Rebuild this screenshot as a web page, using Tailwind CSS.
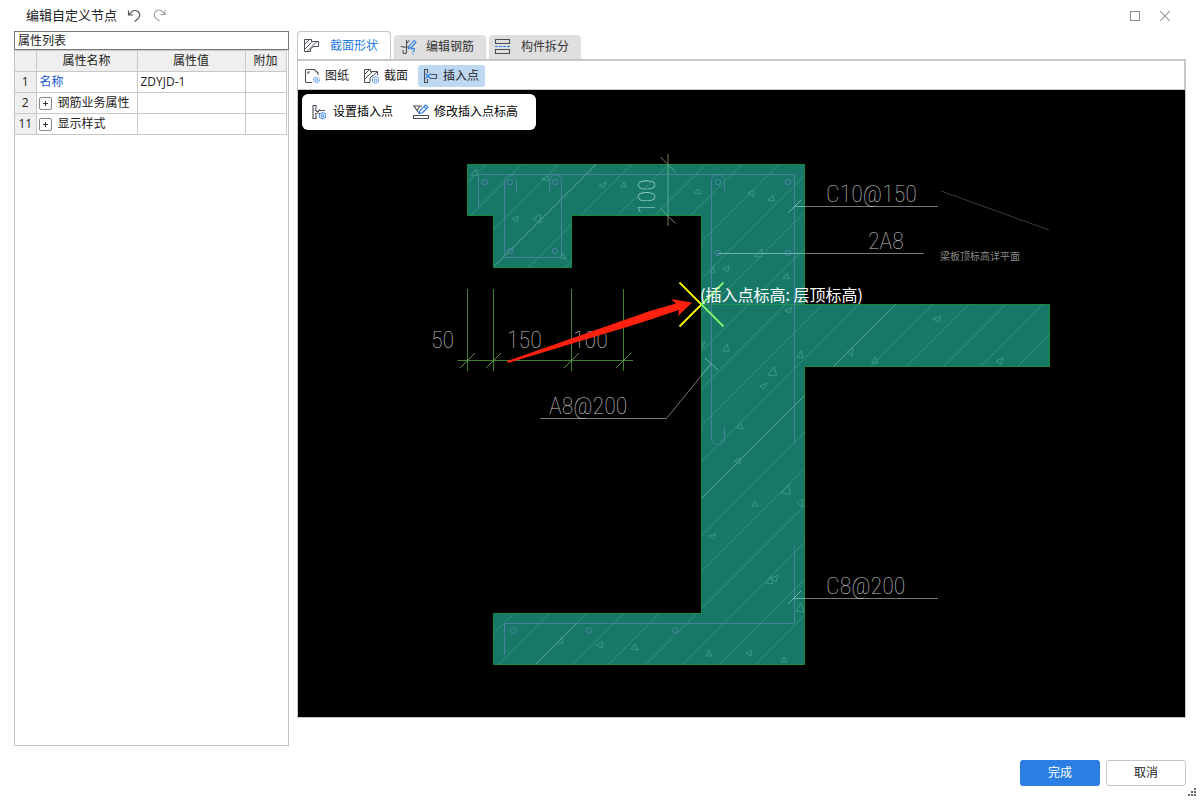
<!DOCTYPE html>
<html lang="zh-CN">
<head>
    <meta charset="UTF-8" />
    <meta name="viewport" content="width=device-width, initial-scale=1" />
    <title>编辑自定义节点</title>
    <script src="https://cdn.jsdelivr.net/npm/@tailwindcss/browser@4"></script>
</head>
<body class="relative flex min-h-screen flex-col bg-white font-['Open_Sans','Noto_Sans_CJK_SC',sans-serif] text-xs text-[#222]">
    <!-- Title bar -->
    <header class="flex h-[31px] items-center pl-[26px] pr-[30px]">
        <h1 class="text-[13px]">编辑自定义节点</h1>
        <button type="button" aria-label="撤销" class="ml-[9px] h-4 w-4">
            <svg viewBox="0 0 16 16" class="h-4 w-4" fill="none" stroke="#555" stroke-width="1.2"><path d="M2.5 2.5 V7 H7 M2.5 7 L6 3.6 C8 1.9 11 2.2 12.6 4.2 C14.2 6.5 13.6 9.1 12 10.7 L8.5 13.5" /></svg>
        </button>
        <button type="button" aria-label="重做" class="ml-[10px] h-4 w-4">
            <svg viewBox="0 0 16 16" class="h-4 w-4" fill="none" stroke="#999" stroke-width="1.1"><path d="M13 2 V6.5 H8.5 M13 6.5 L10 3.2 C8 1.4 5 1.8 3.4 3.8 C1.8 6.1 2.4 8.7 4 10.3 L7.5 13.2" /></svg>
        </button>
        <div class="ml-auto flex gap-5">
            <button type="button" aria-label="最大化" class="h-[10px] w-[10px] border border-[#8a8a8a]"></button>
            <button type="button" aria-label="关闭" class="h-[10px] w-[10px]">
                <svg viewBox="0 0 10 10" class="h-[10px] w-[10px]" stroke="#999" stroke-width="1.1"><path d="M0 0 L10 10 M10 0 L0 10" /></svg>
            </button>
        </div>
    </header>

    <main class="flex flex-1 gap-2 pl-[14px] pr-[14px]">
        <!-- Property list -->
        <section class="mb-[54px] flex w-[275px] shrink-0 flex-col border border-[#c4c4c4] border-t-0">
            <h2 class="-mx-px h-[19px] border border-[#777] pl-[3px] leading-[18px]">属性列表</h2>
            <table class="w-[271px] table-fixed border-collapse text-left [&_td]:border [&_td]:border-l-0 [&_td]:border-[#c8c8c8] [&_th]:border [&_th]:border-l-0 [&_th]:border-[#c8c8c8] [&_th]:font-normal">
                <thead>
                    <tr class="h-[21px] bg-[#efefef] text-center">
                        <th class="w-[21px]"></th>
                        <th class="w-[101px]">属性名称</th>
                        <th class="w-[108px]">属性值</th>
                        <th class="w-[41px]">附加</th>
                    </tr>
                </thead>
                <tbody>
                    <tr class="h-[21px]">
                        <th class="bg-[#efefef] text-center">1</th>
                        <td class="pl-[3px] text-[#1a56d6]">名称</td>
                        <td class="pl-[3px]">ZDYJD-1</td>
                        <td></td>
                    </tr>
                    <tr class="h-[21px]">
                        <th class="bg-[#efefef] text-center">2</th>
                        <td class="pl-[2px]">
                            <div class="flex items-center gap-[6px]">
                                <button type="button" aria-label="展开钢筋业务属性" class="h-[13px] w-[13px] shrink-0 rounded-[2px] border border-[#888]">
                                    <svg viewBox="0 0 11 11" class="h-[11px] w-[11px]" stroke="#333" stroke-width="1"><path d="M3 5.5 H8 M5.5 3 V8" /></svg>
                                </button>
                                <span class="whitespace-nowrap">钢筋业务属性</span>
                            </div>
                        </td>
                        <td></td>
                        <td></td>
                    </tr>
                    <tr class="h-[21px]">
                        <th class="bg-[#efefef] text-center">11</th>
                        <td class="pl-[2px]">
                            <div class="flex items-center gap-[6px]">
                                <button type="button" aria-label="展开显示样式" class="h-[13px] w-[13px] shrink-0 rounded-[2px] border border-[#888]">
                                    <svg viewBox="0 0 11 11" class="h-[11px] w-[11px]" stroke="#333" stroke-width="1"><path d="M3 5.5 H8 M5.5 3 V8" /></svg>
                                </button>
                                <span class="whitespace-nowrap">显示样式</span>
                            </div>
                        </td>
                        <td></td>
                        <td></td>
                    </tr>
                </tbody>
            </table>
        </section>

        <!-- Editor -->
        <section class="mb-[82px] flex min-w-0 flex-1 flex-col">
            <nav class="flex h-7 items-end gap-[3px]">
                <button type="button" class="flex h-7 w-[94px] items-center gap-[10px] rounded-t border border-b-0 border-[#c4c6c8] bg-white pl-[5px] text-[#1f7ae0]">
                    <svg viewBox="0 0 17 16" class="h-4 w-[17px]" fill="none" stroke="#4a4f55" stroke-width="1"><path d="M1.5 1.5 H8.5 V3.5 H15.5 V8.5 H10.5 L7.5 11 V13.5 H1.5 Z M1.5 6.5 L6.5 1.5 M1.5 11.5 L8.5 4.5 M4 13.5 L14 3.5" /></svg>
                    截面形状
                </button>
                <button type="button" class="flex h-6 w-[92px] items-center gap-[9px] rounded-t bg-[#dfdfdf] pl-[6px] text-[#333]">
                    <svg viewBox="0 0 17 16" class="h-4 w-[17px]" fill="none" stroke="#4a4f55" stroke-width="1.1"><path d="M6.5 1 V12.5 C6.5 15.5 3 15.5 3 12.5 V11 M1 8 C2 6 3.5 9 5 8 H9 M6.5 4 C8 4 8 1.5 9.5 1.5" /><path d="M9 7 L14 1.5 L16 3.5 L11 8.5 L8.5 9.5 Z M11 10.5 C12 8.8 15 9 14.5 11 C14.3 12 13 12 13 13.2 M13 14.5 V15.5" stroke="#2b7de0" /></svg>
                    编辑钢筋
                </button>
                <button type="button" class="flex h-6 w-[92px] items-center gap-[10px] rounded-t bg-[#dfdfdf] pl-[5px] text-[#333]">
                    <svg viewBox="0 0 17 16" class="h-4 w-[17px]" fill="none" stroke="#4a4f55" stroke-width="1.1"><path d="M1.5 4.5 V.5 H15.5 V4.5 Z M1.5 14.5 V10.5 H15.5 V14.5 Z" /><path d="M1 7.5 H16" stroke="#2b7de0" stroke-dasharray="3 1" /></svg>
                    构件拆分
                </button>
            </nav>
            <div class="flex h-[31px] items-center gap-[10px] border-2 border-b border-l border-[#c4c6c8] pl-[6px] pt-px">
                <button type="button" class="flex h-[22px] items-center gap-1">
                    <svg viewBox="0 0 17 16" class="h-4 w-[17px]" fill="none" stroke="#4a4f55" stroke-width="1.1"><path d="M8 14.5 H2.5 Q1.5 14.5 1.5 13.5 V2.5 Q1.5 1.5 2.5 1.5 H10.5 L14 5 V7 M4 6 V4 H6" /><circle cx="12.5" cy="12" r="3" stroke="#6aa5e8" stroke-dasharray="1.5 .8" /><circle cx="12.5" cy="12" r="1.2" stroke="#6aa5e8" /></svg>
                    图纸
                </button>
                <button type="button" class="ml-1 flex h-[22px] items-center gap-1">
                    <svg viewBox="0 0 17 16" class="h-4 w-[17px]" fill="none" stroke="#4a4f55" stroke-width="1"><path d="M1.5 14.5 V1.5 H7.5 V3.5 H14.5 V7.5 M1.5 14.5 H7 V10 L9.5 7.5 M1.5 6.5 L6.5 1.5 M1.5 11.5 L9.5 3.5 M9 8.5 L14 4" /><path d="M12.5 8.5 L15.5 10.2 V13.7 L12.5 15.4 L9.5 13.7 V10.2 Z" stroke="#5a9ae8" /><circle cx="12.5" cy="12" r="1.2" stroke="#5a9ae8" /></svg>
                    截面
                </button>
                <button type="button" class="flex h-[22px] w-[67px] items-center gap-1 rounded-[3px] bg-[#bfd8f2] pl-1">
                    <svg viewBox="0 0 17 16" class="h-4 w-[17px]" fill="none" stroke="#4a4f55" stroke-width="1.1"><path d="M5.5 5 V1.5 H2.5 V14.5 H5.5 V11 M9 6.5 H14.5 V10.5 H8" /><path d="M3.5 5.5 L8.5 10.5 M8.5 5.5 L3.5 10.5" stroke="#2b7de0" /></svg>
                    插入点
                </button>
            </div>

            <div class="relative min-h-[400px] flex-1 border border-t-0 border-[#c4c6c8] bg-black">
                <svg viewBox="298 90 887 627" class="absolute inset-0 h-full w-full" fill="none">
                    <defs>
                        <clipPath id="section-clip">
                            <path d="M467.5 164.5 H804.5 V304.5 H1049.5 V366.5 H804.5 V664.5 H493.5 V613.5 H701.5 V215.5 H571.5 V267.5 H493.5 V215.5 H467.5 Z" />
                        </clipPath>
                    </defs>

                    <!-- concrete section -->
                    <path d="M467.5 164.5 H804.5 V304.5 H1049.5 V366.5 H804.5 V664.5 H493.5 V613.5 H701.5 V215.5 H571.5 V267.5 H493.5 V215.5 H467.5 Z" fill="#177868" stroke="#158c39" />
                    <path d="M701 304.5 H805" stroke="#1c9652" />
                    <g id="hatch" clip-path="url(#section-clip)" stroke="#348f7d"></g>
                    <g clip-path="url(#section-clip)" stroke="#7dbba2" stroke-width=".5">
                        <path d="M494 266.7 L596.7 164 M701 499 L805 395 M833 367 L896 304 M536 664 L577 623" />
                    </g>
                    <path stroke="#3f9c89" stroke-width=".9" d="M471 176 L476 169 L478 175 Z M599 186 L606 182 L604 188 Z M621 187 L624 182 L626 187 Z M512 219 L518 216 L517 222 Z M533 219 L540 214 L541 223 Z M561 258 L563 253 L566 259 Z M542 179 L548 176 L550 181 Z
                        M694 193 L698 189 L701 194 Z M748 193 L754 190 L753 197 Z M768 200 L773 195 L774 201 Z M754 256 L762 249 L762 257 Z M723 269 L729 266 L728 272 Z M710 273 L713 267 L715 273 Z M783 278 L787 273 L789 279 Z
                        M785 311 L792 307 L790 313 Z M723 351 L727 344 L729 351 Z M797 357 L801 351 L803 358 Z M768 375 L774 367 L777 376 Z M760 386 L767 383 L764 389 Z M737 428 L741 423 L743 429 Z M702 342 L705 342 L702 348 Z M847 352 L853 348 L852 356 Z M872 363 L875 357 L878 363 Z
                        M933 319 L941 316 L939 322 Z M996 361 L1003 358 L1001 364 Z M734 461 L741 458 L740 464 Z M781 493 L789 485 L790 494 Z M752 506 L755 501 L758 506 Z M797 503 L803 499 L802 507 Z M709 536 L716 534 L713 539 Z M766 583 L771 577 L773 584 Z M771 578 L778 575 L776 582 Z M796 611 L801 603 L804 612 Z
                        M557 643 L562 637 L563 643 Z M596 645 L603 642 L602 648 Z M631 649 L635 644 L638 650 Z M706 656 L709 650 L712 656 Z M746 653 L752 650 L751 656 Z M781 662 L784 657 L787 662 Z" />

                    <!-- rebar -->
                    <g stroke="#4d7fa5">
                        <path d="M478.5 207 V174.5 H794.5 V444 M504.5 181 V257.5 H561.5 V181 M711.5 181 V438 M794.5 546 V623.5 H504.5 V655" />
                        <path d="M504.5 181 C504.5 173 516.5 173 516.5 181 V193 M561.5 181 C561.5 173 549.5 173 549.5 181 V193 M711.5 181 C711.5 173 724.5 173 724.5 181 V193 M711.5 438 C711.5 447 724.5 447 724.5 438 V427" stroke="#46839a" />
                        <circle cx="485" cy="182" r="2.7" />
                        <circle cx="510" cy="182" r="2.7" />
                        <circle cx="555" cy="182" r="2.7" />
                        <circle cx="510" cy="251" r="2.7" />
                        <circle cx="555" cy="251" r="2.7" />
                        <circle cx="718" cy="182" r="2.7" />
                        <circle cx="788" cy="182" r="2.7" />
                        <circle cx="718" cy="253" r="2.7" />
                        <circle cx="788" cy="253" r="2.7" />
                        <circle cx="513" cy="630.5" r="2.7" />
                        <circle cx="589" cy="630.5" r="2.7" />
                        <circle cx="675" cy="630.5" r="2.7" />
                    </g>

                    <!-- dimensions -->
                    <g stroke="#41802f">
                        <path d="M458 360.5 H633 M467.5 289 V371 M493.5 289 V371 M571.5 289 V371 M623.5 289 V371" />
                        <path d="M460 368 L475 353 M486 368 L501 353 M564 368 L579 353 M616 368 L631 353" stroke="#5a8f4c" />
                        <path d="M668 154 V164 M668 216 V226 M660.5 157 L668 164.5 M668 216 L675.5 223.5" stroke="#77805a" />
                        <path d="M668 164 V216 M668 164.5 L675.5 172 M660.5 208.5 L668 216" stroke="#54ad8a" />
                    </g>

                    <!-- leaders -->
                    <g stroke="#777">
                        <path d="M805 206.5 H938 M805 253.5 H924 M805 598.5 H938 M540 418.5 H666.5 L701 376" />
                        <path d="M941 191 L1049 230" stroke="#3c3c3c" />
                        <path d="M795 206.5 H805 M718 253.5 H805 M701 376 L711 364 M788 213 L801 200 M705 358 L718 370 M788 604 L801 591 M794 598.5 H805" stroke="#6db6a5" />
                    </g>

                    <g class="font-['Roboto_Condensed','Roboto',sans-serif] text-[24px] font-thin" fill="#c4c4c4">
                        <text x="826" y="202">C10@150</text>
                        <text x="868" y="249">2A8</text>
                        <text x="826" y="594">C8@200</text>
                        <text x="549" y="414">A8@200</text>
                        <text x="431" y="348">50</text>
                        <text x="507" y="348">150</text>
                        <text x="573" y="348">100</text>
                        <text transform="translate(655 214) rotate(-90)" fill="#a5dcc8">100</text>
                    </g>
                    <text x="940" y="260" class="font-['Noto_Sans_CJK_SC',sans-serif] text-[10px]" fill="#8a8a8a">梁板顶标高详平面</text>

                    <!-- insertion point -->
                    <path d="M679.5 282.5 L701.5 304.5 L679.5 326.5" stroke="#ff0" stroke-width="1.8" />
                    <path d="M723.5 282.5 L701.5 304.5 L723.5 326.5" stroke="#7df56a" stroke-width="1.8" />
                    <text x="700" y="301" class="font-['Noto_Sans_CJK_SC',sans-serif] text-[16px]" fill="#fff">(插入点标高: 层顶标高)</text>
                    <path d="M507 361 L650 311 L676 303.5 L671 299 L692 302.5 L678 316 L679 310 L640 323 L508 363 Z" fill="#ff2010" />
                </svg>

                <div class="absolute left-1 top-1 flex h-9 w-[234px] items-center gap-5 rounded-md bg-white pl-[9px] text-black">
                    <button type="button" class="flex items-center gap-[5px]">
                        <svg viewBox="0 0 17 16" class="h-4 w-[17px]" fill="none" stroke="#4a4f55" stroke-width="1.1"><path d="M5 5 V1.5 H2 V14.5 H5 V11 M4 5.5 L9 10.5 M9 5.5 L4 10.5 M9 6.5 H14" /><path d="M11.5 8.5 L14.5 10 V13.5 L11.5 15 L8.5 13.5 V10 Z" stroke="#5a9ae8" /><circle cx="11.5" cy="11.8" r="1.3" stroke="#5a9ae8" /></svg>
                        设置插入点
                    </button>
                    <button type="button" class="flex items-center gap-1">
                        <svg viewBox="0 0 17 16" class="h-4 w-[17px]" fill="none" stroke="#4a4f55" stroke-width="1.1"><path d="M0 2 H9 M1 2 L4 6.5 L7 2 M4 6.5 L6 9 M.5 11.5 H15.5 V14.5 H.5 Z" /><path d="M6 9.5 L7 6.5 L12.5 1 L15 3.2 L9.5 8.7 Z M11 2.5 L13.5 4.7" stroke="#2b7de0" /></svg>
                        修改插入点标高
                    </button>
                </div>
            </div>
        </section>
    </main>

    <footer class="absolute bottom-[14px] right-[14px] flex gap-[6px]">
        <button type="button" class="h-[26px] w-20 rounded-[3px] bg-[#2b7fe3] text-white">完成</button>
        <button type="button" class="h-[26px] w-20 rounded-[3px] border border-[#c4c6c8] bg-white">取消</button>
    </footer>
    <svg viewBox="0 0 8 8" class="absolute bottom-1 right-1 h-2 w-2" fill="#666"><path d="M6 0h2v2h-2z M3 3h2v2h-2z M6 3h2v2h-2z M0 6h2v2h-2z M3 6h2v2h-2z M6 6h2v2h-2z" /></svg>

    <script>
        // 45 degree hatch lines, x + y = c
        const hatch = document.getElementById('hatch');
        for (let i = -15; i <= 6; i++) {
            const c = Math.round(1200 + i * 36.7);
            const line = document.createElementNS('http://www.w3.org/2000/svg', 'path');
            line.setAttribute('d', `M${c - 160} 160 L${c - 670} 670`);
            hatch.appendChild(line);
        }
    </script>
</body>
</html>
